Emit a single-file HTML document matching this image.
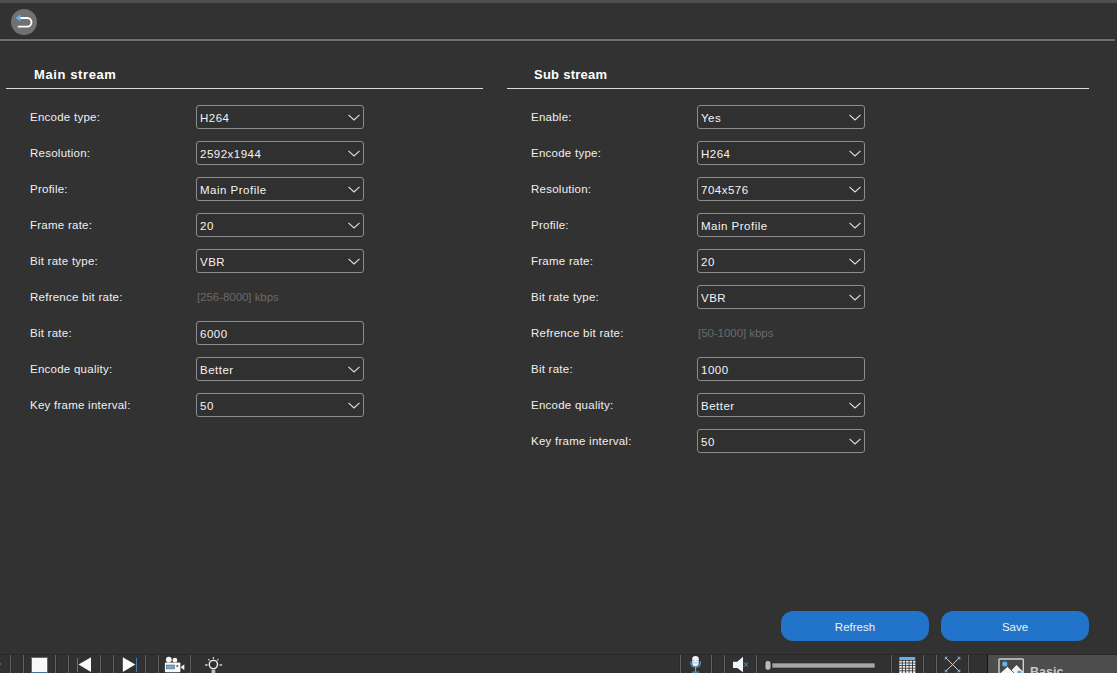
<!DOCTYPE html>
<html><head><meta charset="utf-8">
<style>
*{margin:0;padding:0;box-sizing:border-box}
html,body{width:1117px;height:673px;overflow:hidden;background:#323232;font-family:"Liberation Sans",sans-serif;color:#f2f2f2}
.a{position:absolute}
#top{left:0;top:0;width:1117px;height:3px;background:#4f4f4f}
#hl{left:0;top:38px;width:1116px;height:4px;background:#2e2e2e}
#hl2{left:0;top:39px;width:1115px;height:2px;background:#6e6e6e}
#back{left:11px;top:9px;width:26px;height:26px;border-radius:50%;background:#717171}
.h{font-size:13px;font-weight:bold;letter-spacing:0.6px;color:#fff;top:67px;line-height:16px}
.ul{top:88px;height:1px;background:#dcdcdc}
.lb{font-size:11.5px;line-height:14px;color:#f0f0f0;letter-spacing:0.25px}
.sel{width:168px;height:24px;border:1px solid #8c8c8c;border-radius:3px;background:#303030;font-size:11.5px;line-height:22px;padding-left:3px;padding-top:1px;color:#f4f4f4;letter-spacing:0.5px}
.sel svg{position:absolute;right:3px;top:8px}
.hint{font-size:11.5px;line-height:14px;color:#6a6a6a;letter-spacing:-0.05px}
.btn{top:611px;width:148px;height:30px;border-radius:12px;background:#2174c9;color:#f0f0f0;font-size:11.5px;text-align:center;line-height:30px;padding-top:1px}
</style></head><body>
<div class="a" id="top"></div>
<div class="a" id="hl"></div>
<div class="a" id="hl2"></div>
<div class="a" id="back"><svg width="26" height="26" viewBox="0 0 26 26"><path d="M9 9H16.2A4.3 4.3 0 0 1 16.2 17.6H6.8" fill="none" stroke="#fff" stroke-width="1.8"/><path d="M4.5 9L9.5 5.6V12.4Z" fill="#5ab4f0"/></svg></div>

<!-- Main stream -->
<div class="a h" style="left:34px">Main stream</div>
<div class="a ul" style="left:6px;width:477px"></div>

<!-- Sub stream -->
<div class="a h" style="left:534px;letter-spacing:0.25px">Sub stream</div>
<div class="a ul" style="left:507px;width:582px"></div>

<!--ROWS-->
<div class="a lb" style="left:30px;top:110px">Encode type:</div>
<div class="a sel" style="left:196px;top:105px">H264<svg width="12" height="7" viewBox="0 0 12 7"><path d="M0.5 0.8L6 6L11.5 0.8" fill="none" stroke="#e0e0e0" stroke-width="1.1"/></svg></div>
<div class="a lb" style="left:30px;top:146px">Resolution:</div>
<div class="a sel" style="left:196px;top:141px">2592x1944<svg width="12" height="7" viewBox="0 0 12 7"><path d="M0.5 0.8L6 6L11.5 0.8" fill="none" stroke="#e0e0e0" stroke-width="1.1"/></svg></div>
<div class="a lb" style="left:30px;top:182px">Profile:</div>
<div class="a sel" style="left:196px;top:177px">Main Profile<svg width="12" height="7" viewBox="0 0 12 7"><path d="M0.5 0.8L6 6L11.5 0.8" fill="none" stroke="#e0e0e0" stroke-width="1.1"/></svg></div>
<div class="a lb" style="left:30px;top:218px">Frame rate:</div>
<div class="a sel" style="left:196px;top:213px">20<svg width="12" height="7" viewBox="0 0 12 7"><path d="M0.5 0.8L6 6L11.5 0.8" fill="none" stroke="#e0e0e0" stroke-width="1.1"/></svg></div>
<div class="a lb" style="left:30px;top:254px">Bit rate type:</div>
<div class="a sel" style="left:196px;top:249px">VBR<svg width="12" height="7" viewBox="0 0 12 7"><path d="M0.5 0.8L6 6L11.5 0.8" fill="none" stroke="#e0e0e0" stroke-width="1.1"/></svg></div>
<div class="a lb" style="left:30px;top:290px">Refrence bit rate:</div>
<div class="a hint" style="left:197px;top:290px">[256-8000] kbps</div>
<div class="a lb" style="left:30px;top:326px">Bit rate:</div>
<div class="a sel" style="left:196px;top:321px">6000</div>
<div class="a lb" style="left:30px;top:362px">Encode quality:</div>
<div class="a sel" style="left:196px;top:357px">Better<svg width="12" height="7" viewBox="0 0 12 7"><path d="M0.5 0.8L6 6L11.5 0.8" fill="none" stroke="#e0e0e0" stroke-width="1.1"/></svg></div>
<div class="a lb" style="left:30px;top:398px">Key frame interval:</div>
<div class="a sel" style="left:196px;top:393px">50<svg width="12" height="7" viewBox="0 0 12 7"><path d="M0.5 0.8L6 6L11.5 0.8" fill="none" stroke="#e0e0e0" stroke-width="1.1"/></svg></div>
<div class="a lb" style="left:531px;top:110px">Enable:</div>
<div class="a sel" style="left:697px;top:105px">Yes<svg width="12" height="7" viewBox="0 0 12 7"><path d="M0.5 0.8L6 6L11.5 0.8" fill="none" stroke="#e0e0e0" stroke-width="1.1"/></svg></div>
<div class="a lb" style="left:531px;top:146px">Encode type:</div>
<div class="a sel" style="left:697px;top:141px">H264<svg width="12" height="7" viewBox="0 0 12 7"><path d="M0.5 0.8L6 6L11.5 0.8" fill="none" stroke="#e0e0e0" stroke-width="1.1"/></svg></div>
<div class="a lb" style="left:531px;top:182px">Resolution:</div>
<div class="a sel" style="left:697px;top:177px">704x576<svg width="12" height="7" viewBox="0 0 12 7"><path d="M0.5 0.8L6 6L11.5 0.8" fill="none" stroke="#e0e0e0" stroke-width="1.1"/></svg></div>
<div class="a lb" style="left:531px;top:218px">Profile:</div>
<div class="a sel" style="left:697px;top:213px">Main Profile<svg width="12" height="7" viewBox="0 0 12 7"><path d="M0.5 0.8L6 6L11.5 0.8" fill="none" stroke="#e0e0e0" stroke-width="1.1"/></svg></div>
<div class="a lb" style="left:531px;top:254px">Frame rate:</div>
<div class="a sel" style="left:697px;top:249px">20<svg width="12" height="7" viewBox="0 0 12 7"><path d="M0.5 0.8L6 6L11.5 0.8" fill="none" stroke="#e0e0e0" stroke-width="1.1"/></svg></div>
<div class="a lb" style="left:531px;top:290px">Bit rate type:</div>
<div class="a sel" style="left:697px;top:285px">VBR<svg width="12" height="7" viewBox="0 0 12 7"><path d="M0.5 0.8L6 6L11.5 0.8" fill="none" stroke="#e0e0e0" stroke-width="1.1"/></svg></div>
<div class="a lb" style="left:531px;top:326px">Refrence bit rate:</div>
<div class="a hint" style="left:698px;top:326px">[50-1000] kbps</div>
<div class="a lb" style="left:531px;top:362px">Bit rate:</div>
<div class="a sel" style="left:697px;top:357px">1000</div>
<div class="a lb" style="left:531px;top:398px">Encode quality:</div>
<div class="a sel" style="left:697px;top:393px">Better<svg width="12" height="7" viewBox="0 0 12 7"><path d="M0.5 0.8L6 6L11.5 0.8" fill="none" stroke="#e0e0e0" stroke-width="1.1"/></svg></div>
<div class="a lb" style="left:531px;top:434px">Key frame interval:</div>
<div class="a sel" style="left:697px;top:429px">50<svg width="12" height="7" viewBox="0 0 12 7"><path d="M0.5 0.8L6 6L11.5 0.8" fill="none" stroke="#e0e0e0" stroke-width="1.1"/></svg></div>
<!--/ROWS-->

<div class="a btn" style="left:781px">Refresh</div>
<div class="a btn" style="left:941px">Save</div>

<!--TB-->
<svg class="a" style="left:0;top:654px" width="1117" height="19" viewBox="0 654 1117 19">
<rect x="0" y="654" width="1117" height="19" fill="#313131"/>
<rect x="0" y="654" width="1117" height="1" fill="#292929"/>
<rect x="9" y="655" width="3" height="18" fill="#2c2c2c"/><rect x="10" y="655" width="1" height="18" fill="#626262"/>
<rect x="22" y="655" width="3" height="18" fill="#2c2c2c"/><rect x="23" y="655" width="1" height="18" fill="#626262"/>
<rect x="54" y="655" width="3" height="18" fill="#2c2c2c"/><rect x="55" y="655" width="1" height="18" fill="#626262"/>
<rect x="67" y="655" width="3" height="18" fill="#2c2c2c"/><rect x="68" y="655" width="1" height="18" fill="#626262"/>
<rect x="99" y="655" width="3" height="18" fill="#2c2c2c"/><rect x="100" y="655" width="1" height="18" fill="#626262"/>
<rect x="112" y="655" width="3" height="18" fill="#2c2c2c"/><rect x="113" y="655" width="1" height="18" fill="#626262"/>
<rect x="144" y="655" width="3" height="18" fill="#2c2c2c"/><rect x="145" y="655" width="1" height="18" fill="#626262"/>
<rect x="157" y="655" width="3" height="18" fill="#2c2c2c"/><rect x="158" y="655" width="1" height="18" fill="#626262"/>
<rect x="189" y="655" width="3" height="18" fill="#2c2c2c"/><rect x="190" y="655" width="1" height="18" fill="#626262"/>
<rect x="679" y="655" width="3" height="18" fill="#2c2c2c"/><rect x="680" y="655" width="1" height="18" fill="#626262"/>
<rect x="710" y="655" width="3" height="18" fill="#2c2c2c"/><rect x="711" y="655" width="1" height="18" fill="#626262"/>
<rect x="723" y="655" width="3" height="18" fill="#2c2c2c"/><rect x="724" y="655" width="1" height="18" fill="#626262"/>
<rect x="755" y="655" width="3" height="18" fill="#2c2c2c"/><rect x="756" y="655" width="1" height="18" fill="#626262"/>
<rect x="890" y="655" width="3" height="18" fill="#2c2c2c"/><rect x="891" y="655" width="1" height="18" fill="#626262"/>
<rect x="922" y="655" width="3" height="18" fill="#2c2c2c"/><rect x="923" y="655" width="1" height="18" fill="#626262"/>
<rect x="935" y="655" width="3" height="18" fill="#2c2c2c"/><rect x="936" y="655" width="1" height="18" fill="#626262"/>
<rect x="967" y="655" width="3" height="18" fill="#2c2c2c"/><rect x="968" y="655" width="1" height="18" fill="#626262"/>
<rect x="0" y="663" width="1" height="2" fill="#3f6588"/>
<rect x="31.5" y="657.5" width="16" height="15" fill="#f8f8f8" stroke="#4a6f98" stroke-width="1"/>
<rect x="77" y="658" width="1" height="14" fill="#4c7aa8"/>
<path d="M78.5 664.6L91 657.2V672Z" fill="#f8f8f8"/>
<path d="M122.8 657.2L135.3 664.6L122.8 672Z" fill="#f8f8f8"/>
<rect x="136" y="658" width="1" height="14" fill="#4c7aa8"/>
<circle cx="168.8" cy="659.6" r="2.9" fill="#f4f4f4"/><circle cx="174.9" cy="660.2" r="2.4" fill="#f4f4f4"/>
<rect x="164.9" y="662.4" width="15.5" height="9.8" rx="1" fill="#f8f8f8"/>
<rect x="166.3" y="665" width="8.3" height="3.9" fill="#5ab0ec" stroke="#6a5040" stroke-width="0.5"/>
<rect x="176.4" y="665" width="1.8" height="2" fill="#3a78b0"/>
<path d="M180.6 667.3L184.3 664.3V670.3Z" fill="#f4f4f4"/>
<circle cx="213.4" cy="664.5" r="4.1" fill="none" stroke="#f4f4f4" stroke-width="1.4"/>
<path d="M213.4 657V659M208.3 659.1L209.6 660.5M218.5 659.1L217.2 660.5" stroke="#e8e8e8" stroke-width="1.1"/>
<rect x="205" y="664.3" width="2.6" height="1.4" fill="#d8d8d8"/><rect x="219.5" y="664.3" width="2.6" height="1.4" fill="#d8d8d8"/>
<rect x="211.5" y="669.6" width="3.8" height="3.4" fill="#bdbdbd"/>
<path d="M690.9 661.5V663.3A4.7 3.9 0 0 0 700.3 663.3V661.5" fill="none" stroke="#5aaee8" stroke-width="1.1"/>
<rect x="692.2" y="656" width="6.6" height="10.4" rx="3.3" fill="#f4f4f4"/>
<path d="M692.5 660.5H694.5M696.5 660.5H698.5M692.5 662.8H698.5" stroke="#8aa6c8" stroke-width="0.7"/>
<rect x="695" y="667.3" width="1.1" height="4.5" fill="#5aaee8"/><rect x="692.3" y="671.6" width="6.6" height="1" fill="#5aaee8"/>
<path d="M733 661.8H737.3L743 656.8V672.2L737.3 668H733Z" fill="#f4f4f4"/>
<path d="M743.8 662.2L748 666.8M748 662.2L743.8 666.8" stroke="#5ab0e0" stroke-width="0.8"/>
<rect x="772" y="663" width="103" height="5" fill="#a5a5a5" stroke="#262626" stroke-width="0.6"/>
<rect x="765" y="660.6" width="6" height="9.6" rx="2.6" fill="#bbbbbb" stroke="#1e1e1e" stroke-width="0.8"/>
<rect x="899.3" y="657" width="15.9" height="3" fill="#5ab4f0"/>
<rect x="899.3" y="660.8" width="2.5" height="1.8" fill="#f0f0f0"/>
<rect x="902.7" y="660.8" width="2.5" height="1.8" fill="#f0f0f0"/>
<rect x="906.1" y="660.8" width="2.5" height="1.8" fill="#f0f0f0"/>
<rect x="909.5" y="660.8" width="2.5" height="1.8" fill="#f0f0f0"/>
<rect x="912.9" y="660.8" width="2.5" height="1.8" fill="#f0f0f0"/>
<rect x="899.3" y="663.4" width="2.5" height="1.8" fill="#f0f0f0"/>
<rect x="902.7" y="663.4" width="2.5" height="1.8" fill="#f0f0f0"/>
<rect x="906.1" y="663.4" width="2.5" height="1.8" fill="#f0f0f0"/>
<rect x="909.5" y="663.4" width="2.5" height="1.8" fill="#f0f0f0"/>
<rect x="912.9" y="663.4" width="2.5" height="1.8" fill="#f0f0f0"/>
<rect x="899.3" y="666.0" width="2.5" height="1.8" fill="#f0f0f0"/>
<rect x="902.7" y="666.0" width="2.5" height="1.8" fill="#f0f0f0"/>
<rect x="906.1" y="666.0" width="2.5" height="1.8" fill="#f0f0f0"/>
<rect x="909.5" y="666.0" width="2.5" height="1.8" fill="#f0f0f0"/>
<rect x="912.9" y="666.0" width="2.5" height="1.8" fill="#f0f0f0"/>
<rect x="899.3" y="668.6" width="2.5" height="1.8" fill="#f0f0f0"/>
<rect x="902.7" y="668.6" width="2.5" height="1.8" fill="#f0f0f0"/>
<rect x="906.1" y="668.6" width="2.5" height="1.8" fill="#f0f0f0"/>
<rect x="909.5" y="668.6" width="2.5" height="1.8" fill="#f0f0f0"/>
<rect x="912.9" y="668.6" width="2.5" height="1.8" fill="#f0f0f0"/>
<rect x="899.3" y="671.2" width="2.5" height="1.8" fill="#f0f0f0"/>
<rect x="902.7" y="671.2" width="2.5" height="1.8" fill="#f0f0f0"/>
<rect x="906.1" y="671.2" width="2.5" height="1.8" fill="#f0f0f0"/>
<rect x="909.5" y="671.2" width="2.5" height="1.8" fill="#f0f0f0"/>
<rect x="912.9" y="671.2" width="2.5" height="1.8" fill="#f0f0f0"/>
<path d="M945.6 657.6L959.5 671.5M959.5 657.6L945.6 671.5" stroke="#d0d0d0" stroke-width="1"/>
<path d="M944.8 656.8H948.2L944.8 660.2Z M960.3 656.8H956.9L960.3 660.2Z M944.8 672.3H948.2L944.8 668.9Z M960.3 672.3H956.9L960.3 668.9Z" fill="#4aa8e8"/>
<rect x="987" y="655" width="1" height="18" fill="#141414"/>
<rect x="988" y="655" width="129" height="18" fill="#4d4d4d"/>
<rect x="999" y="659" width="24.3" height="16" rx="0.8" fill="#474747" stroke="#d0d0d0" stroke-width="1.4"/>
<circle cx="1004.8" cy="664" r="2.6" fill="#5ab4f0"/>
<path d="M1011.5 670.3L1016.5 665L1022.6 671.2V673H1014Z" fill="#f0f0f0"/>
<path d="M999.7 673.5L1007.4 666.6L1014.6 673.5Z" fill="#f6f6f6" stroke="#474747" stroke-width="0.7"/>
<circle cx="1019.3" cy="672.3" r="1.9" fill="#4aa0e0"/>
<text x="1030" y="676" font-family="Liberation Sans" font-weight="bold" font-size="12.5" fill="#c8c8c8">Basic</text>
</svg>
<!--/TB-->
</body></html>
